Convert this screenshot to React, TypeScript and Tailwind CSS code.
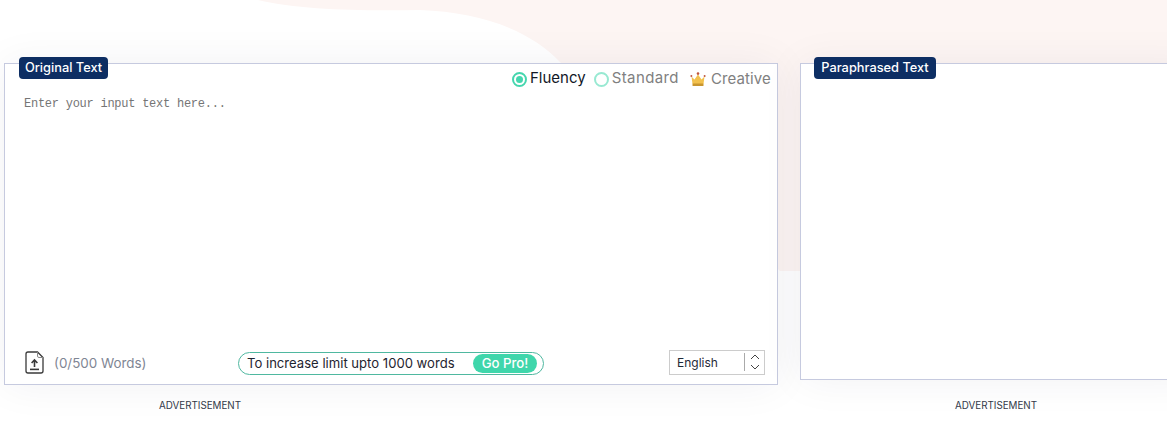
const sans = "font-['Inter','Noto_Sans',sans-serif]"

function Label({ text, className }: { text: string; className: string }) {
  return (
    <div className={`absolute top-[-7px] flex h-[22px] items-center justify-center rounded-[4px] bg-[#0d2e63] text-[12.8px] font-medium text-white ${className}`}>
      {text}
    </div>
  )
}

function Radio({ active, label }: { active?: boolean; label: string }) {
  return (
    <div className="flex items-center gap-[3px]">
      <span className={active ? "flex size-[15px] items-center justify-center rounded-full border-2 border-[#45d6ae]" : "size-[15px] rounded-full border-2 border-[#98e9d2]"}>
        {active && <span className="size-[7px] rounded-full bg-[#45d6ae]" />}
      </span>
      <span className={active ? "mt-[-2px] text-[15px] text-[#111827]" : "mt-[-2px] text-[15px] tracking-[0.4px] text-[#808080]"}>{label}</span>
    </div>
  )
}

function Crown() {
  return (
    <svg width="16" height="15" viewBox="0 0 16 15">
      <path d="M1.5 4.5 L4.5 7.5 L8 2.5 L11.5 7.5 L14.5 4.5 L13.5 12 H2.5 Z" fill="#f2c14e" />
      <rect x="2.5" y="11.5" width="11" height="2.5" rx="0.5" fill="#c9962f" />
      <circle cx="8" cy="1.6" r="1.3" fill="#c0563f" />
      <circle cx="1.4" cy="4" r="1" fill="#c0563f" />
      <circle cx="14.6" cy="4" r="1" fill="#c0563f" />
    </svg>
  )
}

function FileUpload() {
  return (
    <svg width="19" height="23" viewBox="0 0 19 23" fill="none" stroke="#3a3a3a" strokeWidth="1.3">
      <path d="M12.5 1 H3 a2 2 0 0 0 -2 2 V20 a2 2 0 0 0 2 2 H16 a2 2 0 0 0 2 -2 V6.5 Z" />
      <path d="M12.5 1 V5 a1.5 1.5 0 0 0 1.5 1.5 H18" strokeWidth="1" stroke="#8a8a8a" />
      <path d="M9.5 16 V9.5 M6.6 12 L9.5 9 L12.4 12" strokeWidth="1.6" />
      <path d="M5 18.4 H14" strokeWidth="1.6" />
    </svg>
  )
}

export default function App() {
  return (
    <div className={`relative h-[437px] w-full overflow-hidden bg-white ${sans}`}>
      <svg className="absolute inset-0" width="1167" height="437" viewBox="0 0 1167 437">
        <path d="M258 0 C300 10 360 11 420 10 C480 12 530 30 560 62 L780 271 L1167 271 V0 Z" fill="#fdf5f3" />
      </svg>

      <div className="relative flex gap-[22px] pl-1 pt-[63px]">
        <div className="w-[774px] shrink-0">
          <div className="relative flex h-[322px] flex-col border border-[#c6cadf] bg-white shadow-[0_0_40px_rgba(40,40,70,0.06)]">
            <Label text="Original Text" className="left-[14px] w-[89px]" />
            <div className="flex h-[30px] items-center justify-end gap-[8px] pr-[6px] pt-[1px]">
              <Radio active label="Fluency" />
              <Radio label="Standard" />
              <div className="ml-[3px] flex items-center gap-[5px]">
                <Crown />
                <span className="text-[15px] tracking-[0.12px] text-[#808080]">Creative</span>
              </div>
            </div>
            <p className="pl-[19px] pt-[1px] font-['Liberation_Mono',monospace] text-[12px] tracking-[-0.25px] text-[#757575]">Enter your input text here...</p>
            <div className="mt-auto flex items-center pb-[9px] pl-[20px] pr-[12px]">
              <FileUpload />
              <span className="ml-[10px] w-[184px] pt-[2px] text-[13.4px] text-[#7f8694]">(0/500 Words)</span>
              <div className="mt-[3px] flex h-[23px] w-[306px] items-center justify-between rounded-full border border-[#4fb8a0] pl-[8px] pr-[6px]">
                <span className="text-[13.1px] text-[#1f2430]">To increase limit upto 1000 words</span>
                <span className="flex h-[19px] w-[64px] items-center justify-center rounded-full bg-[#3fd6ab] text-[13.2px] font-medium text-white">Go Pro!</span>
              </div>
              <div className="ml-auto flex h-[25px] w-[96px] items-center border border-[#cccccc] pl-[7px]">
                <span className="w-[67px] pt-[1px] text-[12px] text-[#1f2937]">English</span>
                <span className="h-[18px] w-px bg-[#aaaaaa]" />
                <svg className="ml-[5px]" width="10" height="18" viewBox="0 0 10 18" fill="none" stroke="#444" strokeWidth="1">
                  <path d="M1 6 L5 2 L9 6 M1 12 L5 16 L9 12" />
                </svg>
              </div>
            </div>
          </div>
          <p className="mt-[14px] w-[392px] text-center text-[9.8px] text-[#333a4a]">ADVERTISEMENT</p>
        </div>

        <div className="w-[400px] shrink-0">
          <div className="relative h-[317px] border border-[#c6cadf] bg-white shadow-[0_0_40px_rgba(40,40,70,0.06)]">
            <Label text="Paraphrased Text" className="left-[13px] w-[122px]" />
          </div>
          <p className="ml-[1px] mt-[19px] w-[390px] text-center text-[9.8px] text-[#333a4a]">ADVERTISEMENT</p>
        </div>
      </div>
    </div>
  )
}
